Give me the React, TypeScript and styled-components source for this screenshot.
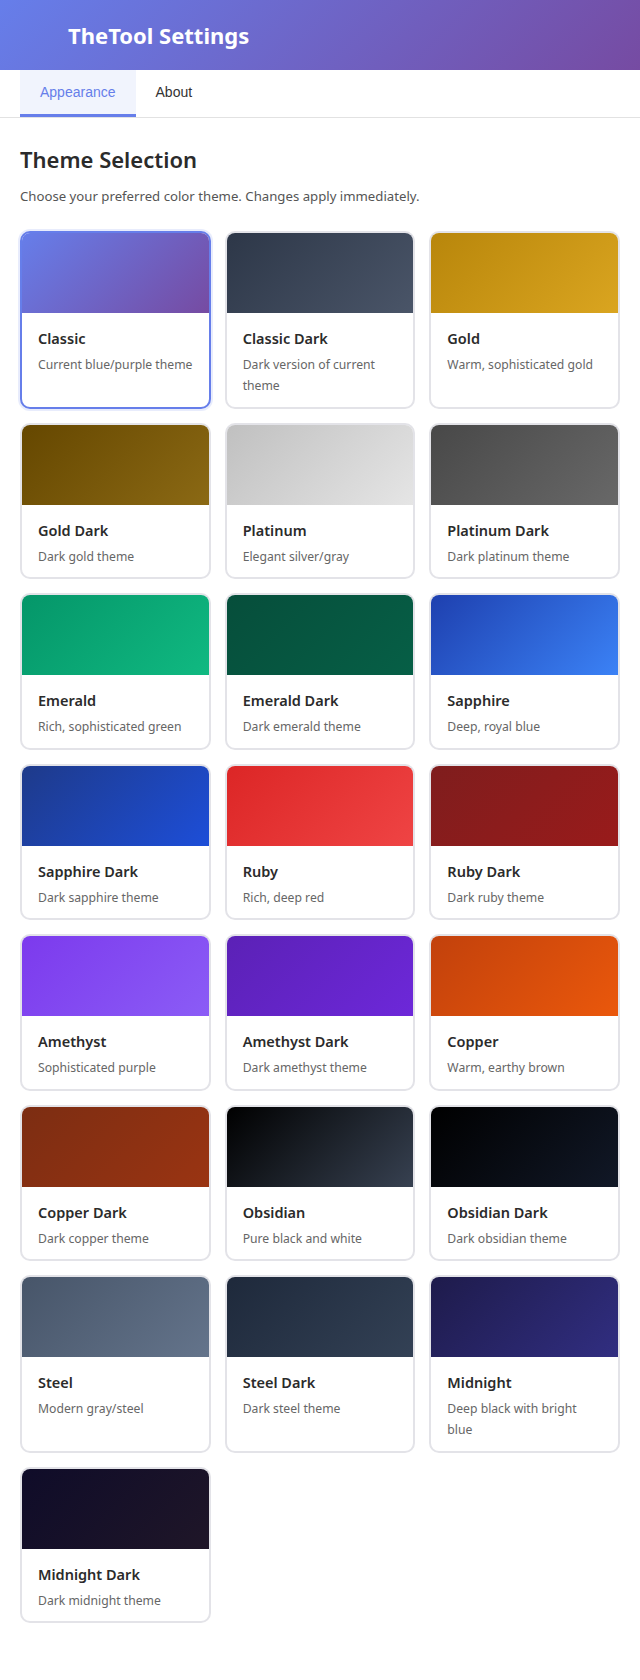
import React from "react";
import styled, { createGlobalStyle } from "styled-components";

const GlobalStyle = createGlobalStyle`
  * { box-sizing: border-box; }
  body {
    margin: 0;
    background: #ffffff;
    font-family: "Noto Sans", "Open Sans", sans-serif;
    color: #333;
  }
`;

const Header = styled.header`
  height: 70px;
  display: flex;
  align-items: center;
  padding: 0 68px;
  background: linear-gradient(135deg, #667eea 0%, #764ba2 100%);
`;

const HeaderTitle = styled.h1`
  margin: 0;
  color: #ffffff;
  font-size: 22px;
  font-weight: 700;
`;

const TabBar = styled.nav`
  display: flex;
  padding: 0 20px;
  border-bottom: 1px solid #e2e2e2;
`;

const Tab = styled.button<{ $active?: boolean }>`
  border: none;
  background: ${(p) => (p.$active ? "#f1f4fd" : "transparent")};
  border-bottom: 3px solid ${(p) => (p.$active ? "#667eea" : "transparent")};
  padding: 14px 20px;
  font-family: "Liberation Sans", Arial, sans-serif;
  font-size: 14px;
  line-height: 16px;
  color: ${(p) => (p.$active ? "#667eea" : "#333")};
  cursor: pointer;
`;

const Content = styled.main`
  padding: 26px 20px 40px;
`;

const Title = styled.h2`
  margin: 0;
  font-size: 22px;
  line-height: 30px;
  font-weight: 600;
  color: #2b2b2b;
`;

const Description = styled.p`
  margin: 11px 0 24px;
  font-size: 13.2px;
  line-height: 22px;
  color: #555;
`;

const Grid = styled.div`
  display: grid;
  grid-template-columns: repeat(3, 1fr);
  gap: 14px;
`;

const Card = styled.div<{ $selected?: boolean }>`
  border: 2px solid ${(p) => (p.$selected ? "#667eea" : "#e3e3e8")};
  border-radius: 10px;
  overflow: hidden;
  background: #fff;
  box-shadow: ${(p) => (p.$selected ? "0 0 0 2px rgba(102,126,234,0.15)" : "none")};
  cursor: pointer;
`;

const Preview = styled.div<{ $from: string; $to: string }>`
  height: 80px;
  background: linear-gradient(135deg, ${(p) => p.$from} 0%, ${(p) => p.$to} 100%);
`;

const CardBody = styled.div`
  padding: 16px 16px 10.5px;
`;

const CardTitle = styled.div`
  font-size: 14.5px;
  line-height: 19px;
  font-weight: 600;
  color: #2b2b2b;
`;

const CardDesc = styled.div`
  margin-top: 6px;
  font-size: 12.2px;
  line-height: 21px;
  color: #666;
`;

const themes = [
  { name: "Classic", desc: "Current blue/purple theme", from: "#667eea", to: "#764ba2" },
  { name: "Classic Dark", desc: "Dark version of current theme", from: "#2d3748", to: "#4a5568" },
  { name: "Gold", desc: "Warm, sophisticated gold", from: "#b8860b", to: "#daa520" },
  { name: "Gold Dark", desc: "Dark gold theme", from: "#654700", to: "#8b6914" },
  { name: "Platinum", desc: "Elegant silver/gray", from: "#c0c0c0", to: "#e5e5e5" },
  { name: "Platinum Dark", desc: "Dark platinum theme", from: "#484848", to: "#686868" },
  { name: "Emerald", desc: "Rich, sophisticated green", from: "#059669", to: "#10b981" },
  { name: "Emerald Dark", desc: "Dark emerald theme", from: "#064e3b", to: "#065f46" },
  { name: "Sapphire", desc: "Deep, royal blue", from: "#1e40af", to: "#3b82f6" },
  { name: "Sapphire Dark", desc: "Dark sapphire theme", from: "#1e3a8a", to: "#1d4ed8" },
  { name: "Ruby", desc: "Rich, deep red", from: "#dc2626", to: "#ef4444" },
  { name: "Ruby Dark", desc: "Dark ruby theme", from: "#7f1d1d", to: "#991b1b" },
  { name: "Amethyst", desc: "Sophisticated purple", from: "#7c3aed", to: "#8b5cf6" },
  { name: "Amethyst Dark", desc: "Dark amethyst theme", from: "#5b21b6", to: "#6d28d9" },
  { name: "Copper", desc: "Warm, earthy brown", from: "#c2410c", to: "#ea580c" },
  { name: "Copper Dark", desc: "Dark copper theme", from: "#7c2d12", to: "#9a3412" },
  { name: "Obsidian", desc: "Pure black and white", from: "#000000", to: "#374151" },
  { name: "Obsidian Dark", desc: "Dark obsidian theme", from: "#000000", to: "#111827" },
  { name: "Steel", desc: "Modern gray/steel", from: "#475569", to: "#64748b" },
  { name: "Steel Dark", desc: "Dark steel theme", from: "#1e293b", to: "#334155" },
  { name: "Midnight", desc: "Deep black with bright blue", from: "#1e1b4b", to: "#312e81" },
  { name: "Midnight Dark", desc: "Dark midnight theme", from: "#0f0c29", to: "#1f1628" },
];

export default function App() {
  return (
    <>
      <GlobalStyle />
      <Header>
        <HeaderTitle>TheTool Settings</HeaderTitle>
      </Header>
      <TabBar>
        <Tab $active>Appearance</Tab>
        <Tab>About</Tab>
      </TabBar>
      <Content>
        <Title>Theme Selection</Title>
        <Description>Choose your preferred color theme. Changes apply immediately.</Description>
        <Grid>
          {themes.map((t, i) => (
            <Card key={t.name} $selected={i === 0}>
              <Preview $from={t.from} $to={t.to} />
              <CardBody>
                <CardTitle>{t.name}</CardTitle>
                <CardDesc>{t.desc}</CardDesc>
              </CardBody>
            </Card>
          ))}
        </Grid>
      </Content>
    </>
  );
}
